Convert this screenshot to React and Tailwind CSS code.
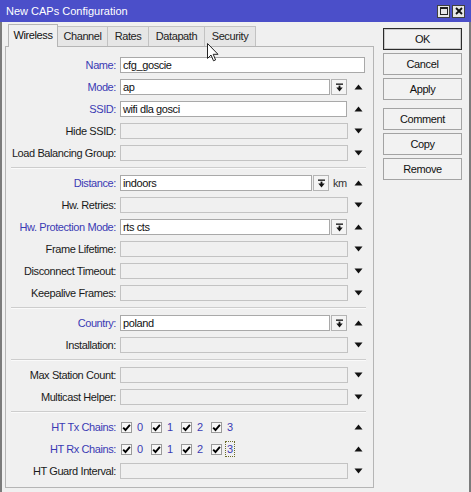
import React from 'react';

const BLUE = 'text-[#3a3ab4]';

function UpArrow() {
  return (
    <svg width="9" height="6" viewBox="0 0 9 6" className="block">
      <path d="M4.5 0.5 L8.5 5.5 L0.5 5.5 Z" fill="#111" />
    </svg>
  );
}

function DownArrow() {
  return (
    <svg width="9" height="6" viewBox="0 0 9 6" className="block">
      <path d="M0.5 0.5 L8.5 0.5 L4.5 5.5 Z" fill="#111" />
    </svg>
  );
}

function DropButton() {
  return (
    <div className="ml-[1px] flex h-[16px] w-[16px] shrink-0 items-center justify-center border border-[#b4b4b4] bg-[#f4f4f4]">
      <svg width="9" height="9" viewBox="0 0 9 9" className="block">
        <rect x="1" y="0.5" width="7" height="1.3" fill="#111" />
        <rect x="3.6" y="2.6" width="1.8" height="2.4" fill="#111" />
        <path d="M1.3 4.6 L7.7 4.6 L4.5 8.4 Z" fill="#111" />
      </svg>
    </div>
  );
}

function TextBox({ value, w }) {
  return (
    <div className={`flex h-[16px] shrink-0 items-center border border-[#a9a9a9] bg-white px-[2px] leading-none text-[#111] ${w}`}>
      {value}
    </div>
  );
}

function EmptyBox() {
  return <div className="h-[16px] w-[228px] shrink-0 border border-[#c3c3c3] bg-[#f0f0f0]" />;
}

function Row({ label, req, arrow, children }) {
  return (
    <div className="flex h-[22px] items-center">
      <div className={`w-[110px] shrink-0 whitespace-nowrap text-right ${req ? BLUE : 'text-[#1a1a1a]'}`}>{label}:</div>
      <div className="ml-[4px] flex w-[228px] shrink-0 items-center">{children}</div>
      <div className="flex w-[20px] shrink-0 justify-center">
        {arrow === 'up' && <UpArrow />}
        {arrow === 'down' && <DownArrow />}
      </div>
    </div>
  );
}

function Separator() {
  return (
    <div className="flex h-[8px] items-center">
      <div className="ml-[5px] w-[355px] border-t border-b border-t-[#cdcdcd] border-b-[#fafafa]" />
    </div>
  );
}

function Check({ n, focus }) {
  return (
    <div className="flex w-[30px] shrink-0 items-center">
      <div className="flex h-[11px] w-[11px] items-center justify-center border border-[#9a9a9a] bg-[#f7f7f7]">
        <svg width="9" height="9" viewBox="0 0 9 9" className="block">
          <path d="M1.2 4.6 L3.5 7 L7.9 1.8" stroke="#000" strokeWidth="1.9" fill="none" />
        </svg>
      </div>
      <span className={`ml-[3px] px-[1px] leading-[14px] ${BLUE} ${focus ? 'border border-dotted border-[#6b6b2a]' : 'border border-transparent'}`}>
        {n}
      </span>
    </div>
  );
}

function ChainRow({ label }) {
  return (
    <Row label={label} req arrow="up">
      <div className="ml-[1px] flex items-center">
        <Check n="0" />
        <Check n="1" />
        <Check n="2" />
        <Check n="3" focus={label === 'HT Rx Chains'} />
      </div>
    </Row>
  );
}

function Btn({ children, def }) {
  return (
    <div
      className={`flex h-[22px] w-[79px] items-center justify-center bg-[#f2f2f2] text-[#111] ${
        def ? 'border border-[#2b2b2b] shadow-[inset_0_0_0_1px_#c9c9c9]' : 'border border-[#a3a3a3]'
      }`}
    >
      {children}
    </div>
  );
}

const tabs = [
  { name: 'Wireless', w: 'w-[50px]' },
  { name: 'Channel', w: 'w-[50px]' },
  { name: 'Rates', w: 'w-[41px]' },
  { name: 'Datapath', w: 'w-[56px]' },
  { name: 'Security', w: 'w-[51px]' },
];

export default function App() {
  return (
    <div className="relative flex h-[492px] w-[471px] flex-col overflow-hidden bg-[#f0f0f0] font-['Liberation_Sans',Arial,sans-serif] text-[11px] tracking-[-0.4px]">
      {/* title bar */}
      <div className="flex h-[22px] shrink-0 items-center bg-[#4b4fc9] pl-[6px] pr-[6px] text-white">
        <span className="flex-1 tracking-normal">New CAPs Configuration</span>
        <div className="flex gap-[2px]">
          <div className="flex h-[13px] w-[13px] items-center justify-center border border-[#404040] bg-[#e6e6e6]">
            <div className="h-[8px] w-[8px] border border-[#222] border-t-2" />
          </div>
          <div className="flex h-[13px] w-[13px] items-center justify-center border border-[#404040] bg-[#e6e6e6]">
            <svg width="8" height="8" viewBox="0 0 8 8" className="block">
              <path d="M1 1 L7 7 M7 1 L1 7" stroke="#111" strokeWidth="1.8" />
            </svg>
          </div>
        </div>
      </div>

      <div className="flex flex-1 border-l-2 border-r-2 border-[#7b7b7b]">
        {/* left: tabs + panel */}
        <div className="pl-[3px] pt-[2px]">
          <div className="ml-[3px] flex h-[22px] items-end">
            {tabs.map((t, i) =>
              i === 0 ? (
                <div
                  key={t.name}
                  className={`relative z-10 -mb-px flex h-[23px] items-center justify-center border border-b-0 border-[#b5b5b5] bg-[#f0f0f0] pb-[2px] text-[#111] ${t.w}`}
                >
                  {t.name}
                </div>
              ) : (
                <div
                  key={t.name}
                  className={`flex h-[20px] items-center justify-center border border-b-0 border-l-0 border-[#c2c2c2] bg-[#e6e6e6] text-[#222] ${t.w}`}
                >
                  {t.name}
                </div>
              )
            )}
          </div>
          <div className="w-[369px] border border-[#b5b5b5] pt-[7px] pb-[5px]">
            <div className="flex h-[22px] items-center">
              <div className={`w-[110px] shrink-0 text-right ${BLUE}`}>Name:</div>
              <div className="ml-[4px]">
                <TextBox value="cfg_goscie" w="w-[245px]" />
              </div>
            </div>
            <Row label="Mode" req arrow="up">
              <TextBox value="ap" w="w-[210px]" />
              <DropButton />
            </Row>
            <Row label="SSID" req arrow="up">
              <TextBox value="wifi dla gosci" w="w-[227px]" />
            </Row>
            <Row label="Hide SSID" arrow="down">
              <EmptyBox />
            </Row>
            <Row label="Load Balancing Group" arrow="down">
              <EmptyBox />
            </Row>
            <Separator />
            <Row label="Distance" req arrow="up">
              <TextBox value="indoors" w="w-[192px]" />
              <DropButton />
              <span className="ml-[4px] text-[#333]">km</span>
            </Row>
            <Row label="Hw. Retries" arrow="down">
              <EmptyBox />
            </Row>
            <Row label="Hw. Protection Mode" req arrow="up">
              <TextBox value="rts cts" w="w-[210px]" />
              <DropButton />
            </Row>
            <Row label="Frame Lifetime" arrow="down">
              <EmptyBox />
            </Row>
            <Row label="Disconnect Timeout" arrow="down">
              <EmptyBox />
            </Row>
            <Row label="Keepalive Frames" arrow="down">
              <EmptyBox />
            </Row>
            <Separator />
            <Row label="Country" req arrow="up">
              <TextBox value="poland" w="w-[210px]" />
              <DropButton />
            </Row>
            <Row label="Installation" arrow="down">
              <EmptyBox />
            </Row>
            <Separator />
            <Row label="Max Station Count" arrow="down">
              <EmptyBox />
            </Row>
            <Row label="Multicast Helper" arrow="down">
              <EmptyBox />
            </Row>
            <Separator />
            <ChainRow label="HT Tx Chains" />
            <ChainRow label="HT Rx Chains" />
            <Row label="HT Guard Interval" arrow="down">
              <EmptyBox />
            </Row>
          </div>
        </div>

        {/* right: buttons */}
        <div className="ml-[9px] flex flex-col pt-[6px]">
          <Btn def>OK</Btn>
          <div className="mt-[3px]"><Btn>Cancel</Btn></div>
          <div className="mt-[3px]"><Btn>Apply</Btn></div>
          <div className="mt-[8px]"><Btn>Comment</Btn></div>
          <div className="mt-[3px]"><Btn>Copy</Btn></div>
          <div className="mt-[3px]"><Btn>Remove</Btn></div>
        </div>
      </div>

      {/* mouse pointer */}
      <svg width="12" height="19" viewBox="0 0 12 19" className="absolute left-[207px] top-[43px]">
        <path d="M0.5 0.5 L0.5 15.5 L4 12 L6.5 17.8 L8.6 16.9 L6.2 11.3 L11 11.3 Z" fill="#fff" stroke="#222" strokeWidth="1" />
      </svg>
    </div>
  );
}
